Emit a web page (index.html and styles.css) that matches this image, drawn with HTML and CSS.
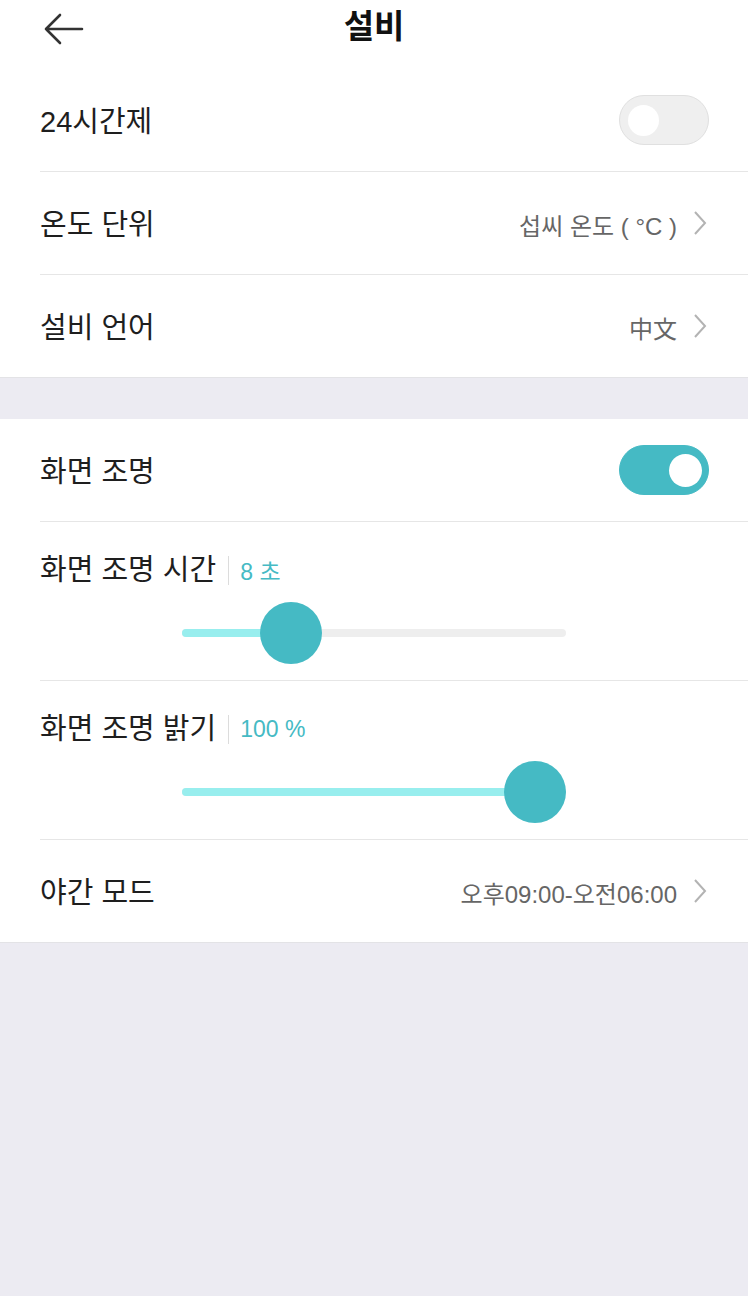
FILE: index.html
```html
<!DOCTYPE html>
<html lang="ko">
<head>
    <meta charset="UTF-8">
    <meta name="viewport" content="width=device-width, initial-scale=1.0">
    <title>설비</title>
    <link rel="stylesheet" href="styles.css">
</head>
<body>
    <div class="header">
        <div class="back">
            <svg width="40" height="32" viewBox="0 0 40 32">
                <path d="M2 16 H38 M16 2 L2 16 L16 30" fill="none" stroke="#333" stroke-width="2.6" stroke-linecap="round" stroke-linejoin="round"/>
            </svg>
        </div>
        <div class="title">설비</div>
        <div></div>
    </div>

    <div class="section">
        <div class="row">
            <span class="label">24시간제</span>
            <div class="toggle"><span class="knob"></span></div>
        </div>
        <div class="row">
            <span class="label">온도 단위</span>
            <div class="value">섭씨 온도 ( °C )
                <svg class="chev" width="14" height="26" viewBox="0 0 14 26"><polyline points="2,2 12,13 2,24" fill="none" stroke="#b3b3b3" stroke-width="2"/></svg>
            </div>
        </div>
        <div class="row last">
            <span class="label">설비 언어</span>
            <div class="value">中文
                <svg class="chev" width="14" height="26" viewBox="0 0 14 26"><polyline points="2,2 12,13 2,24" fill="none" stroke="#b3b3b3" stroke-width="2"/></svg>
            </div>
        </div>
    </div>

    <div class="section second">
        <div class="row">
            <span class="label">화면 조명</span>
            <div class="toggle on"><span class="knob"></span></div>
        </div>
        <div class="row slider-row">
            <div class="slider-label">
                <span class="label">화면 조명 시간</span>
                <span class="sep"></span>
                <span class="amount">8 초</span>
            </div>
            <div class="slider" style="--pos: 0.242">
                <div class="track"><div class="fill"></div></div>
                <div class="thumb"></div>
            </div>
        </div>
        <div class="row slider-row">
            <div class="slider-label">
                <span class="label">화면 조명 밝기</span>
                <span class="sep"></span>
                <span class="amount">100 %</span>
            </div>
            <div class="slider" style="--pos: 1">
                <div class="track"><div class="fill"></div></div>
                <div class="thumb"></div>
            </div>
        </div>
        <div class="row last">
            <span class="label">야간 모드</span>
            <div class="value">오후09:00-오전06:00
                <svg class="chev" width="14" height="26" viewBox="0 0 14 26"><polyline points="2,2 12,13 2,24" fill="none" stroke="#b3b3b3" stroke-width="2"/></svg>
            </div>
        </div>
    </div>
</body>
</html>
```

FILE: styles.css
```css
body {
    margin: 0;
    background-color: #ecebf2;
    font-family: "Liberation Sans", "Noto Sans CJK KR", sans-serif;
    color: #1e1e1e;
    min-height: 1296px;
}

.header {
    height: 69px;
    background-color: #fff;
    display: grid;
    grid-template-columns: 1fr auto 1fr;
    align-items: center;
    padding: 0 44px 16px 44px;
    box-sizing: border-box;
}

.back svg {
    display: block;
    margin-top: 4px;
}

.title {
    font-size: 33px;
    font-weight: bold;
    color: #111;
    line-height: 40px;
}

.section {
    background-color: #fff;
    border-bottom: 1px solid #e3e3e6;
}

.second {
    margin-top: 41px;
}

.row {
    height: 103px;
    margin-left: 40px;
    padding-right: 40px;
    box-sizing: border-box;
    border-bottom: 1px solid #e6e6e6;
    display: flex;
    align-items: center;
    justify-content: space-between;
}

.row.last {
    border-bottom: none;
    height: 102px;
}

.label {
    font-size: 29px;
    line-height: 34px;
    padding-top: 4px;
}

.value {
    font-size: 24px;
    color: #666;
    display: flex;
    align-items: center;
    gap: 16px;
    margin-right: 1px;
    padding-top: 2px;
}

.chev {
    display: block;
    margin-top: -2px;
}

/* interruptor */
.toggle {
    width: 90px;
    height: 50px;
    border-radius: 25px;
    background-color: #efefef;
    border: 1px solid #e0e0e0;
    box-sizing: border-box;
    display: flex;
    align-items: center;
    padding-left: 8px;
    margin-right: -1px;
}

.toggle .knob {
    width: 31px;
    height: 31px;
    border-radius: 50%;
    background-color: #fff;
}

.toggle.on {
    background-color: #45bac4;
    border-color: #45bac4;
    justify-content: flex-end;
    padding-left: 0;
    padding-right: 6px;
}

.toggle.on .knob {
    width: 33px;
    height: 33px;
}

/* linhas com slider */
.slider-row {
    height: 159px;
    flex-direction: column;
    align-items: stretch;
    justify-content: flex-start;
    padding-top: 27px;
}

.slider-label {
    display: flex;
    align-items: center;
}

.sep {
    width: 1px;
    height: 29px;
    background-color: #dcdcdc;
    margin: 4px 11px 0 12px;
}

.amount {
    font-size: 23px;
    color: #45bac4;
    padding-top: 4px;
}

.slider {
    position: relative;
    width: 384px;
    height: 62px;
    margin: 15px auto 0 auto;
    display: flex;
    align-items: center;
}

.track {
    width: 100%;
    height: 8px;
    border-radius: 4px;
    background-color: #eeeeee;
}

.fill {
    height: 100%;
    border-radius: 4px;
    background-color: #98eeee;
    width: calc(var(--pos) * (100% - 62px) + 31px);
}

.thumb {
    position: absolute;
    top: 0;
    left: calc(var(--pos) * (100% - 62px));
    width: 62px;
    height: 62px;
    border-radius: 50%;
    background-color: #45bac4;
}
```
